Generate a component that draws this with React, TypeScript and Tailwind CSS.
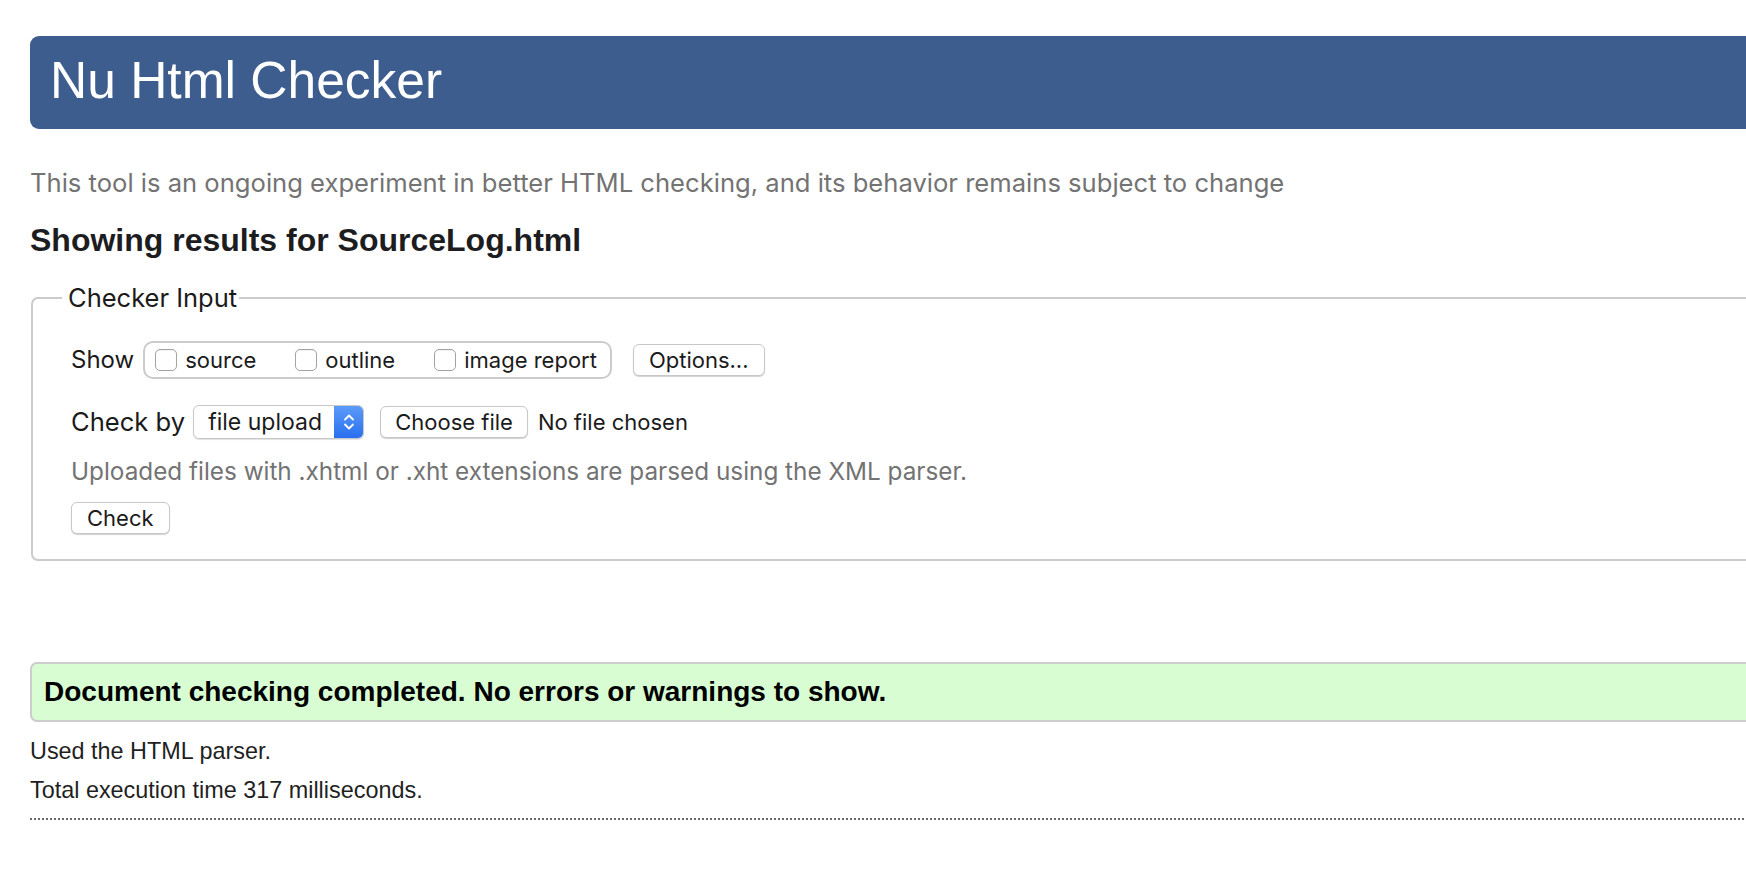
import { useState } from "react";

const sf = "font-['Inter','Noto_Sans',sans-serif]";
const helv = "font-['Liberation_Sans','Arial',sans-serif]";

const Checkbox = ({ label }: { label: string }) => {
  const [on, setOn] = useState(false);
  return (
    <label className="flex items-center gap-[8px] cursor-pointer">
      <input
        type="checkbox"
        checked={on}
        onChange={() => setOn(!on)}
        className="appearance-none w-[22px] h-[22px] rounded-[5px] border border-[#a3a3a3] bg-white shadow-[inset_0_1px_1px_rgba(0,0,0,0.06)]"
      />
      <span>{label}</span>
    </label>
  );
};

const Button = ({
  children,
  tight,
}: {
  children: React.ReactNode;
  tight?: boolean;
}) => (
  <button
    className={`h-[32px] ${tight ? "px-[14px]" : "px-[15px]"} rounded-[6px] border border-[#c8c8c8] bg-white text-[22px] leading-none text-[#1b1b1b] shadow-[0_1px_1px_rgba(0,0,0,0.18)]`}
  >
    {children}
  </button>
);

export default function App() {
  return (
    <div className="w-screen min-h-screen overflow-hidden bg-white">
      <div className="w-[2000px] pl-[30px] pt-[36px]">
        <header className="h-[93px] rounded-l-[9px] bg-[#3d5d8f] pl-[20px] pt-[18px]">
          <h1 className={`${helv} text-[51.5px] leading-[52px] text-white`}>
            Nu Html Checker
          </h1>
        </header>

        <p className={`${sf} mt-[39px] text-[25.6px] leading-[30px] text-[#737373]`}>
          This tool is an ongoing experiment in better HTML checking, and its
          behavior remains subject to change
        </p>

        <h2
          className={`${helv} mt-[25px] text-[32px] leading-[34px] font-bold text-[#1d1d1f]`}
        >
          Showing results for SourceLog.html
        </h2>

        <fieldset
          className={`${sf} mt-[26px] ml-[1px] rounded-l-[7px] border-2 border-[#cbcbcb] pl-[38px] pt-[28px] pb-[25px] text-[22px] text-[#1b1b1b]`}
        >
          <legend className="-ml-[9px] pl-[6px] pr-[2px] text-[25.5px] leading-[30px]">
            Checker Input
          </legend>

          <div className="flex items-center">
            <span className="mr-[9px] text-[24px]">Show</span>
            <div className="flex h-[38px] items-center gap-[39px] rounded-[10px] border-2 border-[#cbcbcb] pl-[10px] pr-[13px]">
              <Checkbox label="source" />
              <Checkbox label="outline" />
              <Checkbox label="image report" />
            </div>
            <div className="ml-[21px]">
              <Button>Options...</Button>
            </div>
          </div>

          <div className="mt-[26px] flex h-[34px] items-center">
            <span className="mr-[8px] text-[25.6px]">Check by</span>
            <div className="flex h-[34px] w-[171px] items-stretch overflow-hidden rounded-[6px] border border-[#c8c8c8] bg-white shadow-[0_1px_1px_rgba(0,0,0,0.12)]">
              <span className="flex flex-1 items-center pl-[14px] text-[23px]">
                file upload
              </span>
              <span className="flex w-[29px] items-center justify-center bg-gradient-to-b from-[#5b9bf8] to-[#2a6ef0]">
                <svg width="12" height="20" viewBox="0 0 12 20" fill="none">
                  <path
                    d="M2 7.5 6 3.5l4 4M2 12.5l4 4 4-4"
                    stroke="white"
                    strokeWidth="1.8"
                    strokeLinecap="round"
                    strokeLinejoin="round"
                  />
                </svg>
              </span>
            </div>
            <div className="ml-[16px]">
              <Button tight>Choose file</Button>
            </div>
            <span className="ml-[10px]">No file chosen</span>
          </div>

          <p className="mt-[18px] text-[24.3px] leading-[28px] text-[#737373]">
            Uploaded files with .xhtml or .xht extensions are parsed using the
            XML parser.
          </p>

          <div className="mt-[17px] flex">
            <Button>Check</Button>
          </div>
        </fieldset>

        <div
          className={`${helv} mt-[101px] rounded-l-[7px] border-2 border-[#cccccc] bg-[#d8fdd3] py-[12px] pl-[12px] text-[28px] leading-[32px] font-bold text-black`}
        >
          Document checking completed. No errors or warnings to show.
        </div>

        <div className={`${helv} text-[23.4px] leading-[28px] text-[#1f1f1f]`}>
          <p className="mt-[15px]">Used the HTML parser.</p>
          <p className="mt-[11px]">Total execution time 317 milliseconds.</p>
        </div>

        <div className="mt-[14px] border-t-2 border-dotted border-[#6a6a6a]" />
      </div>
    </div>
  );
}
